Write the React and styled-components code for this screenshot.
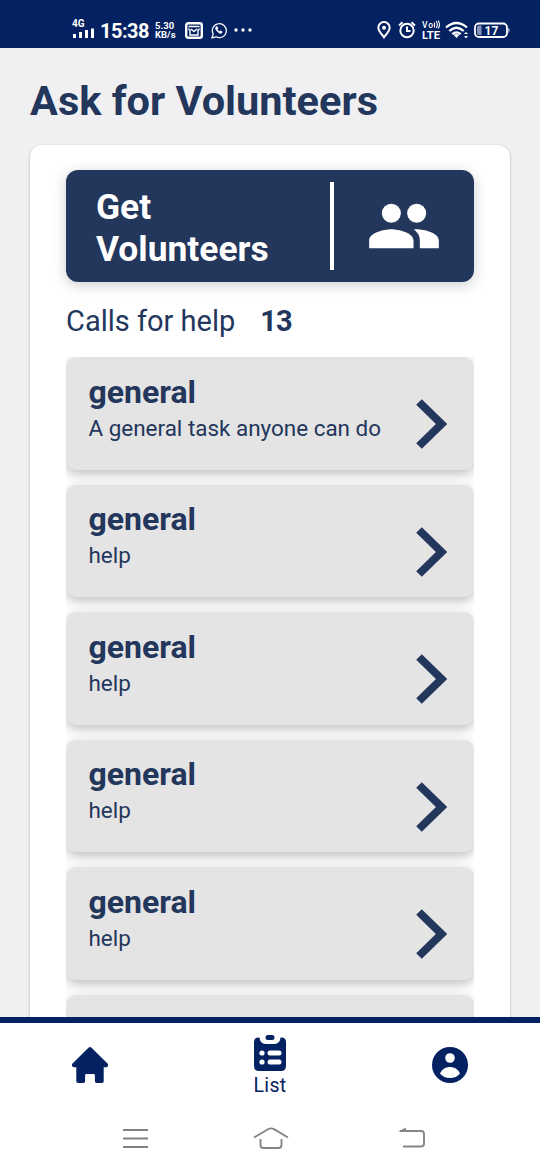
import React from "react"
import styled, { createGlobalStyle } from "styled-components"

const navy = "#042162"
const ink = "#23365c"

const GlobalStyle = createGlobalStyle`
  * {
    box-sizing: border-box;
  }
  body {
    margin: 0;
    font-family: Roboto, "Liberation Sans", sans-serif;
    color: ${ink};
  }
  svg {
    display: block;
    flex: none;
  }
`

const Screen = styled.div`
  display: flex;
  flex-direction: column;
  width: 540px;
  height: 1170px;
  overflow: hidden;
  background: #f0f0f2;
`

const StatusBar = styled.header`
  display: flex;
  justify-content: space-between;
  flex: none;
  height: 48px;
  padding: 0 29px 0 72px;
  background: ${navy};
  color: #fff;
`

const StatusGroup = styled.div`
  display: flex;
  align-items: center;
  padding-top: 12px;
`

const Signal = styled.div`
  display: flex;
  flex-direction: column;
  width: 28px;
  margin-top: -4px;
  font-size: 10px;
  font-weight: 700;
  line-height: 9px;
`

const Clock = styled.span`
  width: 55px;
  padding-top: 1px;
  font-size: 20px;
  font-weight: 700;
  line-height: 20px;
  letter-spacing: -0.5px;
`

const Speed = styled.div`
  width: 30px;
  font-size: 9.5px;
  font-weight: 700;
  line-height: 9px;
  white-space: nowrap;
`

const StatusIcon = styled.svg`
  margin-left: ${(p) => p.$gap || 0}px;
`

const Content = styled.main`
  display: flex;
  flex-direction: column;
  flex: 1;
  min-height: 0;
  padding: 29px 30px 0;
`

const Title = styled.h1`
  flex: none;
  height: 68px;
  margin: 0;
  font-size: 41.5px;
  line-height: 48px;
  font-weight: 700;
  white-space: nowrap;
`

const Card = styled.section`
  display: flex;
  flex-direction: column;
  flex: 1;
  min-height: 0;
  padding: 24.5px 36px 0;
  border-radius: 12px 12px 0 0;
  background: #fff;
  box-shadow: 0 1px 3px rgba(0, 0, 0, 0.28);
`

const CallButton = styled.button`
  display: flex;
  align-items: center;
  flex: none;
  height: 112.5px;
  padding: 0 0 0 30px;
  border: 0;
  border-radius: 12px;
  background: ${ink};
  box-shadow: 0 3px 14px rgba(0, 0, 0, 0.2);
  color: #fff;
  font-family: inherit;
  text-align: left;
`

const CallLabel = styled.span`
  width: 234px;
  padding: 6px 40px 0 0;
  font-size: 35.4px;
  font-weight: 700;
  line-height: 41.5px;
`

const Divider = styled.span`
  width: 4px;
  height: 88px;
  background: #fff;
`

const IconSlot = styled.span`
  display: flex;
  justify-content: center;
  flex: 1;
`

const Summary = styled.p`
  display: flex;
  flex: none;
  height: 75px;
  margin: 0;
  padding-top: 21px;
  font-size: 29px;
  line-height: 36px;
`

const Count = styled.strong`
  margin-left: 25px;
  letter-spacing: -0.9px;
`

const List = styled.ul`
  flex: 1;
  min-height: 0;
  margin: 0;
  padding: 0;
  overflow: hidden;
  list-style: none;
`

const Row = styled.li`
  display: flex;
  justify-content: space-between;
  height: 112.5px;
  margin-bottom: 15px;
  padding: 15.5px 27px 0 22.5px;
  border-radius: 10px;
  background: #e4e4e4;
  box-shadow: 0 4px 12px rgba(0, 0, 0, 0.26);
`

const RowTitle = styled.h2`
  margin: 0;
  font-size: 32px;
  line-height: 39px;
  font-weight: 700;
`

const RowText = styled.p`
  margin: 0;
  font-size: 22.45px;
  line-height: 32px;
  white-space: nowrap;
`

const Chevron = styled.svg`
  margin-top: 26.5px;
`

const TabBar = styled.nav`
  display: grid;
  grid-template-columns: repeat(3, 1fr);
  flex: none;
  height: 86px;
  border-top: 6px solid ${navy};
  background: #fff;
  color: ${navy};
`

const Tab = styled.a`
  display: flex;
  flex-direction: column;
  align-items: center;
  padding-top: ${(p) => (p.$active ? 12 : 24)}px;
  font-size: 19.5px;
  line-height: 24px;
`

const TabLabel = styled.span`
  margin-top: 3px;
  letter-spacing: 0.3px;
`

const SystemBar = styled.footer`
  display: flex;
  align-items: center;
  justify-content: space-between;
  flex: none;
  height: 67px;
  padding: 5px 114px 3px 122px;
  background: #fff;
`

const HomeKey = styled.svg`
  margin-right: 6px;
`

const calls = [
  { title: "general", text: "A general task anyone can do" },
  { title: "general", text: "help" },
  { title: "general", text: "help" },
  { title: "general", text: "help" },
  { title: "general", text: "help" },
  { title: "general", text: "help" },
]

function PhoneStatus() {
  return (
    <StatusBar>
      <StatusGroup>
        <Signal>
          4G
          <svg width="23" height="10" viewBox="0 0 23 10" fill="#fff">
            <path d="M1 6h3v4H1zM7 4h3v6H7zM13 2h3v8h-3zM19 .5h3V10h-3z" />
          </svg>
        </Signal>
        <Clock>15:38</Clock>
        <Speed>
          5.30
          <br />
          KB/s
        </Speed>
        <StatusIcon width="18" height="17" viewBox="0 0 18 17">
          <rect x="1.2" y="1.2" width="15.6" height="14.6" rx="2" fill="none" stroke="#fff" strokeWidth="2.4" />
          <path d="M3.5 4.5h11M5 7.500V13h8V7.500M3.500 6.500 5 9M14.500 6.500 13 9M6 7l3 2.500L12 7" fill="none" stroke="#fff" strokeWidth="1.4" />
        </StatusIcon>
        <StatusIcon $gap={8} width="16" height="17" viewBox="0 0 16 17" fill="none" stroke="#fff">
          <path d="M1 15.8 2.2 12A7 7 0 1 1 5 14.8z" strokeWidth="1.2" />
          <path d="M5.2 4.8c-1 1-.6 2.5.8 4.2 1.8 2 3.7 3 4.8 1.7l.3-.9-1.9-1-1 .9C7.1 9 6.6 8.3 6.2 7.4l.8-.8-.8-1.9z" strokeWidth=".8" fill="#fff" />
        </StatusIcon>
        <StatusIcon $gap={7} width="18" height="4" viewBox="0 0 18 4" fill="#fff">
          <circle cx="2" cy="2" r="1.7" />
          <circle cx="9" cy="2" r="1.7" />
          <circle cx="16" cy="2" r="1.7" />
        </StatusIcon>
      </StatusGroup>
      <StatusGroup>
        <StatusIcon width="14" height="18" viewBox="0 0 14 18" fill="none" stroke="#fff">
          <path d="M7 16.3C3.500 12 1.300 9.500 1.300 6.700a5.700 5.700 0 0 1 11.400 0C12.700 9.500 10.500 12 7 16.300z" strokeWidth="2" />
          <circle cx="7" cy="6.800" r="2" fill="#fff" stroke="none" />
        </StatusIcon>
        <StatusIcon $gap={7} width="18" height="18" viewBox="0 0 18 18" fill="none" stroke="#fff" strokeWidth="2">
          <circle cx="9" cy="9.500" r="6.700" />
          <path d="M9 5.500v4.500h3.500M1 4.500 4.500 1.300M17 4.500 13.500 1.300" />
        </StatusIcon>
        <StatusIcon $gap={6} width="19" height="22" viewBox="0 0 19 22" fill="#fff">
          <text x="0" y="8.500" fontSize="8.500" fontWeight="500" textLength="11">
            Vo
          </text>
          <path d="M12.500 3.500v5M14.200 2q2.300 3.500 0 7M16.200 1.500q2.600 4 0 8" fill="none" stroke="#fff" strokeWidth="1.100" />
          <text x="0" y="20" fontSize="10.500" fontWeight="700" textLength="18" lengthAdjust="spacingAndGlyphs">
            LTE
          </text>
        </StatusIcon>
        <StatusIcon $gap={4} width="24" height="18" viewBox="0 0 24 18" fill="none" stroke="#fff" strokeWidth="2.300">
          <path d="M1 6.500Q11.500-2.500 22 6.500M4.300 10Q11.500 3.500 18.700 10M7.300 13.200Q11.500 9.500 15.700 13.200" />
          <path d="m8.700 14 2.800 3 2.800-3q-2.800-2-5.600 0z" fill="#fff" stroke="none" />
          <path d="m19 13 2-2 2 2zM19 15l2 2.500 2-2.500z" fill="#fff" stroke="none" />
        </StatusIcon>
        <StatusIcon $gap={5} width="37" height="17" viewBox="0 0 37 17">
          <rect x="1" y="1.500" width="32" height="13.500" rx="4" fill="none" stroke="#fff" strokeWidth="1.800" />
          <path d="M7.500 3.500v9.500H5q-2 0-2-2v-5.500q0-2 2-2z" fill="#8794b5" />
          <path d="M34.500 5.500q2 2.700 0 5.500z" fill="#fff" />
          <text x="17.500" y="12.500" fill="#fff" fontSize="12" fontWeight="700" textAnchor="middle">
            17
          </text>
        </StatusIcon>
      </StatusGroup>
    </StatusBar>
  )
}

function CallRow({ title, text }) {
  return (
    <Row>
      <div>
        <RowTitle>{title}</RowTitle>
        <RowText>{text}</RowText>
      </div>
      <Chevron width="31" height="50" viewBox="0 0 31 50">
        <path d="M3 3 25.500 25 3 47" fill="none" stroke={ink} strokeWidth="8" />
      </Chevron>
    </Row>
  )
}

export default function App() {
  return (
    <Screen>
      <GlobalStyle />
      <PhoneStatus />
      <Content>
        <Title>Ask for Volunteers</Title>
        <Card>
          <CallButton>
            <CallLabel>Get Volunteers</CallLabel>
            <Divider />
            <IconSlot>
              <svg width="76" height="76" viewBox="0 0 24 24" fill="#fff">
                <circle cx="8" cy="8" r="3" />
                <circle cx="16" cy="8" r="3" />
                <path d="M8 13c-2.330 0-7 1.170-7 3.500V19h14v-2.500c0-2.330-4.670-3.500-7-3.500zm8 0c-.29 0-.62.020-.97.050 1.160.84 1.970 1.970 1.970 3.450V19h6v-2.500c0-2.330-4.670-3.500-7-3.500z" />
              </svg>
            </IconSlot>
          </CallButton>
          <Summary>
            Calls for help <Count>13</Count>
          </Summary>
          <List>
            {calls.map((call, i) => (
              <CallRow key={i} {...call} />
            ))}
          </List>
        </Card>
      </Content>
      <TabBar>
        <Tab>
          <svg width="36" height="36" viewBox="0 0 36 36" fill={navy}>
            <path d="M16.700.6q1.300-1.200 2.600 0L35.500 16.500q1 1.200.2 2.700-.4 1-1.500 1H31.700v14q0 1.800-1.800 1.800h-5.200q-1.800 0-1.800-1.800v-6q0-1.200-1.200-1.200h-7.400q-1.200 0-1.200 1.200v6q0 1.800-1.800 1.800h-5.200q-1.800 0-1.800-1.800V20.200H1.800q-1.100 0-1.500-1-.8-1.500.2-2.700z" />
          </svg>
        </Tab>
        <Tab $active>
          <svg width="32" height="36" viewBox="0 0 32 36" fill={navy}>
            <rect x="11.500" y="0" width="9" height="5" rx="2.500" />
            <path d="M5.500 2.500Q6 9 11.500 9h9q5.500 0 6-6.500Q32 2 32 7v24q0 5-5 5H5q-5 0-5-5V7q0-5 5.500-4.500z" />
            <g fill="#fff">
              <circle cx="8" cy="18" r="2.600" />
              <circle cx="8" cy="27" r="2.600" />
              <rect x="13.500" y="15.500" width="14" height="5" rx="2.500" />
              <rect x="13.500" y="24.500" width="14" height="5" rx="2.500" />
            </g>
          </svg>
          <TabLabel>List</TabLabel>
        </Tab>
        <Tab>
          <svg width="36" height="36" viewBox="0 0 36 36">
            <circle cx="18" cy="18" r="18" fill={navy} />
            <circle cx="18" cy="11" r="4.800" fill="#fff" />
            <path d="M8 26.500C10 22 14 20 18 20s8 2 10 6.500C25.500 29.500 22 31 18 31s-7.500-1.500-10-4.500z" fill="#fff" />
          </svg>
        </Tab>
      </TabBar>
      <SystemBar>
        <svg width="27" height="22" viewBox="0 0 27 22" fill="none" stroke="#808080" strokeWidth="1.900">
          <path d="M1 3h25M1 11.500h25M1 20h25" />
        </svg>
        <HomeKey width="36" height="22" viewBox="0 0 36 22" fill="none" stroke="#858585" strokeWidth="1.900">
          <path d="m1 10.500 14-8.300q3-1.700 6 0l14 8.300M7.500 12v6q0 3 3 3h15q3 0 3-3v-6" />
        </HomeKey>
        <svg width="28" height="22" viewBox="0 0 28 22" fill="none" stroke="#858585" strokeWidth="1.900">
          <path d="M2 4h21q3 0 3 3v9.500q0 3-3 3H5" />
          <path d="M0 4.500 8 .5v4z" fill="#858585" stroke="none" />
        </svg>
      </SystemBar>
    </Screen>
  )
}
